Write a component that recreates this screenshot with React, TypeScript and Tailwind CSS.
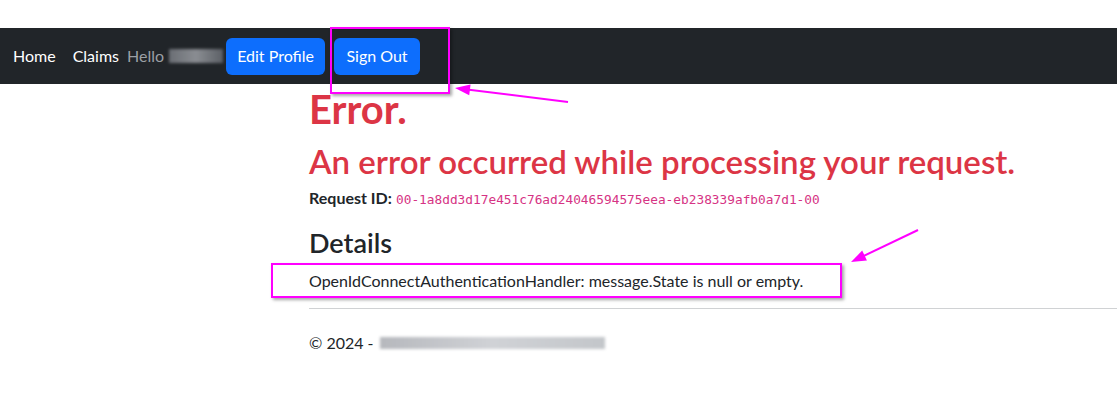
const font = { fontFamily: '"Segoe UI", Lato, "Noto Sans", "Liberation Sans", sans-serif' };

function Blur({ w, className = "" }: { w: number; className?: string }) {
  return (
    <span
      className={`inline-block h-[12px] align-middle blur-[1.5px] ${className}`}
      style={{ width: w }}
    />
  );
}

function Arrow({ x1, y1, x2, y2 }: { x1: number; y1: number; x2: number; y2: number }) {
  const a = Math.atan2(y2 - y1, x2 - x1);
  const l = 16;
  const s = 0.35;
  const p1 = `${x2 - l * Math.cos(a - s)},${y2 - l * Math.sin(a - s)}`;
  const p2 = `${x2 - l * Math.cos(a + s)},${y2 - l * Math.sin(a + s)}`;
  return (
    <g>
      <line x1={x1} y1={y1} x2={x2 - 8 * Math.cos(a)} y2={y2 - 8 * Math.sin(a)} stroke="#ff00ff" strokeWidth={2} />
      <polygon points={`${x2},${y2} ${p1} ${p2}`} fill="#ff00ff" />
    </g>
  );
}

export default function App() {
  return (
    <div className="relative min-h-[404px] bg-white text-[#212529]" style={font}>
      <div className="h-[28px]" />
      <nav className="flex h-[56px] items-center bg-[#212529] pl-[13px] text-[16px]">
        <a className="text-white">Home</a>
        <a className="ml-[17px] text-white">Claims</a>
        <span className="ml-[8px] flex items-center text-[#9b9fa4]">
          Hello
          <span className="ml-[5px] inline-flex h-[14px] w-[54px] bg-gradient-to-r from-[#6a6e74] via-[#8a8d92] to-[#5c6066] blur-[1.5px]" />
        </span>
        <button className="ml-[3px] h-[37px] w-[99px] rounded-[6px] bg-[#0d6efd] text-white">Edit Profile</button>
        <button className="ml-[9px] h-[37px] w-[86px] rounded-[6px] bg-[#0d6efd] text-white">Sign Out</button>
      </nav>

      <main className="pl-[309px]">
        <h1 className="mt-[1px] text-[40px] font-bold leading-[48px] text-[#dc3545]">Error.</h1>
        <h2 className="mt-[9px] text-[33px] font-semibold leading-[38px] text-[#dc3545]">
          An error occurred while processing your request.
        </h2>
        <p className="mt-[6px] text-[16px] leading-[24px]">
          <strong className="font-bold">Request ID:</strong>{" "}
          <code className="text-[12.8px] text-[#d63384]" style={{ fontFamily: '"DejaVu Sans Mono", "Liberation Mono", monospace' }}>
            00-1a8dd3d17e451c76ad24046594575eea-eb238339afb0a7d1-00
          </code>
        </p>
        <h3 className="mt-[15px] text-[27px] font-semibold leading-[32px]">Details</h3>
        <p className="mt-[10px] text-[16px] leading-[24px]">
          OpenIdConnectAuthenticationHandler: message.State is null or empty.
        </p>
        <hr className="mt-[15px] border-t border-[#d0d2d4]" />
        <footer className="mt-[22px] flex items-center text-[16px] leading-[24px]">
          © 2024 -
          <Blur w={225} className="ml-[6px] bg-gradient-to-r from-[#b6b8bd] via-[#d0d2d6] to-[#c3c6ca]" />
        </footer>
      </main>

      <div className="pointer-events-none absolute left-[330px] top-[27px] h-[67px] w-[120px] border-2 border-[#ff00ff] shadow-[2px_2px_3px_rgba(0,0,0,0.35)]" />
      <div className="pointer-events-none absolute left-[271px] top-[263px] h-[35px] w-[571px] border-2 border-[#ff00ff] shadow-[2px_2px_3px_rgba(0,0,0,0.35)]" />
      <svg className="pointer-events-none absolute left-0 top-0" width={1117} height={404}>
        <Arrow x1={568} y1={102} x2={455} y2={88} />
        <Arrow x1={918} y1={230} x2={851} y2={262} />
      </svg>
    </div>
  );
}
